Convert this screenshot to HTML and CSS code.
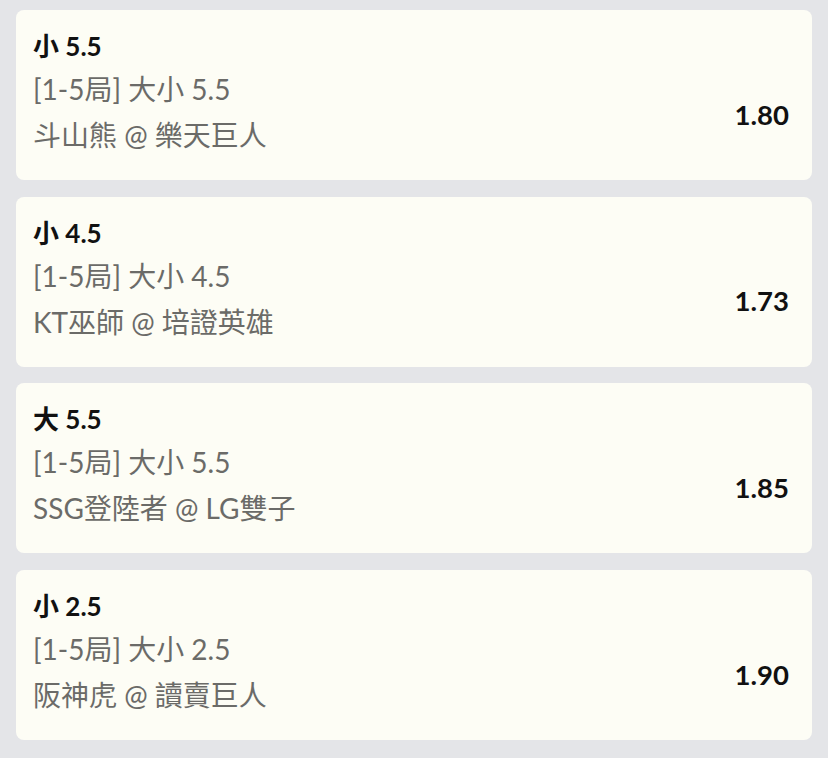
FILE: index.html
```html
<!DOCTYPE html>
<html lang="zh-Hant">
<head>
<meta charset="utf-8">
<link rel="stylesheet" href="styles.css">
</head>
<body>
<div class="list">
  <div class="card">
    <div class="info">
      <div class="title">小 5.5</div>
      <div class="sub">[1-5局] 大小 5.5</div>
      <div class="sub">斗山熊 @ 樂天巨人</div>
    </div>
    <div class="odds">1.80</div>
  </div>
  <div class="card">
    <div class="info">
      <div class="title">小 4.5</div>
      <div class="sub">[1-5局] 大小 4.5</div>
      <div class="sub">KT巫師 @ 培證英雄</div>
    </div>
    <div class="odds">1.73</div>
  </div>
  <div class="card">
    <div class="info">
      <div class="title">大 5.5</div>
      <div class="sub">[1-5局] 大小 5.5</div>
      <div class="sub">SSG登陸者 @ LG雙子</div>
    </div>
    <div class="odds">1.85</div>
  </div>
  <div class="card">
    <div class="info">
      <div class="title">小 2.5</div>
      <div class="sub">[1-5局] 大小 2.5</div>
      <div class="sub">阪神虎 @ 讀賣巨人</div>
    </div>
    <div class="odds">1.90</div>
  </div>
</div>
</body>
</html>
```
FILE: styles.css
```css
html, body {
  margin: 0;
  padding: 0;
  background: #e4e5e8;
  font-family: Lato, "Noto Sans CJK TC", sans-serif;
}
.list {
  display: flex;
  flex-direction: column;
  gap: 16.7px;
  padding: 10px 16px 0 16px;
}
.card {
  height: 170px;
  box-sizing: border-box;
  background: #fdfdf5;
  border-radius: 8px;
  display: flex;
  align-items: center;
  justify-content: space-between;
  padding: 0 23px 0 17px;
}
.info {
  align-self: flex-start;
  padding-top: 16px;
  display: flex;
  flex-direction: column;
}
.title {
  font-size: 26px;
  font-weight: 700;
  color: #111;
  line-height: 40px;
}
.sub {
  font-size: 28px;
  color: #6b6b68;
  line-height: 46px;
}
.odds {
  font-size: 27.5px;
  font-weight: 700;
  color: #111;
  margin-top: 38px;
}
```
